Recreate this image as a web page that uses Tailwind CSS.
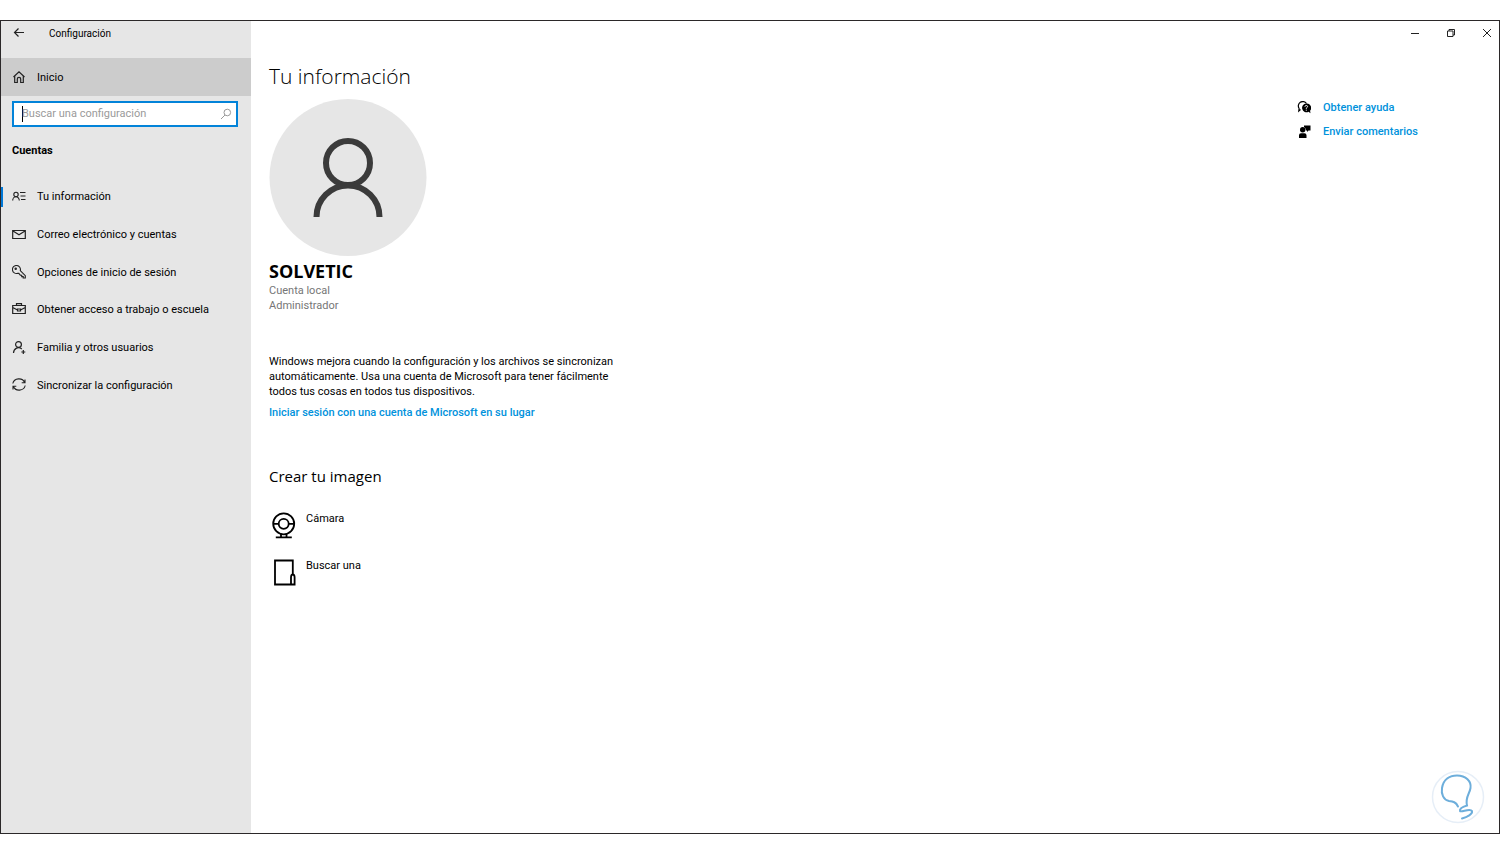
<!DOCTYPE html>
<html lang="es">

<head>
  <meta charset="UTF-8" />
  <meta name="viewport" content="width=device-width, initial-scale=1.0" />
  <title>Configuración</title>
  <script src="https://cdn.jsdelivr.net/npm/@tailwindcss/browser@4"></script>
</head>

<body class="bg-white font-[Roboto,'Open_Sans',sans-serif] text-[11px] leading-[15px] text-black">
  <div class="min-h-screen pt-5 pb-[19px] flex">
    <div class="flex-1 flex border border-[#2b2829]">

      <!-- Sidebar -->
      <aside class="w-[250px] shrink-0 bg-[#e6e6e6]">
        <header class="h-[37px] flex items-start pt-1 pl-3">
          <button aria-label="Atrás" class="w-9 h-4 flex items-center">
            <svg class="w-3 h-3" viewBox="0 0 12 12" fill="none" stroke="#222" stroke-width="1.2"><path d="M11 5.500H1.500M5.500 1.500l-4 4 4 4" /></svg>
          </button>
          <h1 class="text-[10px] leading-[18px]">Configuración</h1>
        </header>

        <a href="#" class="h-[38px] flex items-center gap-3 pl-3 bg-[#cccccc]">
          <svg class="w-3 h-3" viewBox="0 0 12 12" fill="none" stroke="#222" stroke-width="1.200"><path d="M.5 6L6 .9 11.500 6M1.700 5v6.500h2.600V8a1.700 1.700 0 0 1 3.400 0v3.500h2.600V5" /></svg>
          Inicio
        </a>

        <div class="mt-[5px] ml-[11px] mr-[13px] h-[26px] flex items-center px-2 bg-white border-2 border-[#0283d9]">
          <div class="w-px h-4 -mr-px bg-black"></div>
          <input type="text" aria-label="Buscar una configuración" placeholder="Buscar una configuración" class="flex-1 min-w-0 h-5 leading-5 outline-none placeholder:text-[#9a9a9a]" />
          <svg class="w-3 h-3 -mr-1" viewBox="0 0 12 12" fill="none" stroke="#999" stroke-width="1"><circle cx="7.300" cy="4.500" r="3.300" /><path d="M5 7L1 11" /></svg>
        </div>

        <h2 class="mt-4 mb-5 px-[11px] font-bold">Cuentas</h2>

        <nav class="h-[226px] flex flex-col">
          <a href="#" class="flex-1 flex items-center">
            <span class="w-[2px] h-5 mr-[9px] bg-[#0078d7]"></span>
            <svg class="w-[14px] h-[14px] mr-[11px]" viewBox="0 0 14 14" fill="none" stroke="#222" stroke-width="1.100"><circle cx="4" cy="4.500" r="2.200" /><path d="M.7 10.500a3.300 3.800 0 0 1 6.600 0M8 2.500h5.500M8.500 6h5M9 9.500h4.500" /></svg>
            Tu información
          </a>
          <a href="#" class="flex-1 flex items-center gap-[11px] pl-[11px]">
            <svg class="w-[14px] h-[14px]" viewBox="0 0 14 14" fill="none" stroke="#222" stroke-width="1.200"><path d="M.7 2.500h12.600v8H.7zM1 3l6 3.800L13 3" /></svg>
            Correo electrónico y cuentas
          </a>
          <a href="#" class="flex-1 flex items-center gap-[11px] pl-[11px]">
            <svg class="w-[14px] h-[14px]" viewBox="0 0 14 14" fill="none" stroke="#222" stroke-width="1.100"><path d="M5.700 8.300A4 4 0 1 1 8.300 5.600L13.300 10.700V13H11.200V11.600H9.700V10.200H8.300L6.800 8.400z" /><circle cx="3.700" cy="3.700" r=".7" /></svg>
            Opciones de inicio de sesión
          </a>
          <a href="#" class="flex-1 flex items-center gap-[11px] pl-[11px]">
            <svg class="w-[14px] h-[14px]" viewBox="0 0 14 14" fill="none" stroke="#222" stroke-width="1.200"><path d="M.7 2.500h12.600v8H.7zM4.500 2.500V.7h5v1.800M.7 4.500L5.500 7M13.300 4.500L8.500 7M5.500 6h3v2h-3z" /></svg>
            Obtener acceso a trabajo o escuela
          </a>
          <a href="#" class="flex-1 flex items-center gap-[11px] pl-[11px]">
            <svg class="w-[14px] h-[14px]" viewBox="0 0 14 14" fill="none" stroke="#222" stroke-width="1.200"><circle cx="6.500" cy="3.500" r="2.900" /><path d="M1.500 12A5 5.500 0 0 1 9.800 8M11.300 9v4M9.300 11h4" /></svg>
            Familia y otros usuarios
          </a>
          <a href="#" class="flex-1 flex items-center gap-[11px] pl-[11px]">
            <svg class="w-[14px] h-[14px]" viewBox="0 0 14 14" fill="none" stroke="#222" stroke-width="1.100"><path d="M.8 5.500A6.200 5.800 0 0 1 12.700 4.700M13 1.500v3.300H9.700M13.200 7.500A6.200 5.800 0 0 1 1.300 8.300M1 11.500V8.200h3.300" /></svg>
            Sincronizar la configuración
          </a>
        </nav>
      </aside>

      <div class="flex-1 flex flex-col">
        <!-- Window buttons -->
        <div class="h-6 flex items-center justify-end gap-6 pr-[6px]">
          <button aria-label="Minimizar"><svg class="w-3 h-3" viewBox="0 0 12 12" stroke="#222"><path d="M2 6.500h8" /></svg></button>
          <button aria-label="Restaurar"><svg class="w-3 h-3" viewBox="0 0 12 12" fill="none" stroke="#222"><path d="M2.500 4h5.500v5.500H2.500zM4 4V2.500h5.500V8H8" /></svg></button>
          <button aria-label="Cerrar"><svg class="w-3 h-3" viewBox="0 0 12 12" stroke="#222"><path d="M2 2l8 8M10 2l-8 8" /></svg></button>
        </div>

        <div class="flex-1 flex justify-between pl-[18px]">
          <main class="w-[360px]">
            <h2 class="mt-[15px] font-['Open_Sans',sans-serif] text-[21px] leading-8 font-light">Tu información</h2>
            <svg class="mt-[7px] w-[158px] h-[157px]" viewBox="0 0 158 157" fill="none" stroke="#3b3b3b" stroke-width="6"><circle cx="79" cy="78.500" r="78.500" fill="#e6e6e6" stroke="none" /><circle cx="79" cy="64" r="22" /><path d="M47.500 118a31.500 31.500 0 0 1 63 0" /></svg>
            <h3 class="mt-[3px] font-['Open_Sans',sans-serif] text-[18px] leading-6 font-bold">SOLVETIC</h3>
            <p class="text-[#767676]">Cuenta local</p>
            <p class="text-[#767676]">Administrador</p>

            <p class="mt-[41px]">Windows mejora cuando la configuración y los archivos se sincronizan<br>automáticamente. Usa una cuenta de Microsoft para tener fácilmente<br>todos tus cosas en todos tus dispositivos.</p>
            <a href="#" class="mt-[6px] block text-[#0092dc] font-medium">Iniciar sesión con una cuenta de Microsoft en su lugar</a>

            <h3 class="mt-[44px] font-['Open_Sans',sans-serif] text-[15px] leading-6">Crear tu imagen</h3>
            <a href="#" class="mt-[23px] flex gap-[9px]">
              <svg class="w-7 h-7" viewBox="0 0 28 28" fill="none" stroke="#000" stroke-width="1.800"><circle cx="14.700" cy="12.800" r="10.500" /><circle cx="14.700" cy="12.800" r="5" /><path d="M4 12.800h5.700M19.700 12.800H25M12 22.500v3.500M17.500 22.500v3.500M6.800 26.300h16" /></svg>
              Cámara
            </a>
            <a href="#" class="mt-[19px] flex gap-[9px]">
              <svg class="w-7 h-7" viewBox="0 0 28 28" fill="none" stroke="#000" stroke-width="1.800"><path d="M22 26.500H6V2.500h17.800v14M22 26.500v-7q0-3 1.800-3t1.800 3v7z" /></svg>
              Buscar una
            </a>
          </main>

          <div class="w-[202px] flex flex-col">
            <nav class="mt-[55px] flex flex-col gap-[9px] text-[#0092dc] font-medium">
              <a href="#" class="flex items-center gap-3">
                <svg class="w-[14px] h-[14px]" viewBox="0 0 14 14"><path d="M3.500 8.500L1.800 10l.3-2.500A4.200 4.200 0 1 1 9.500 2.500" fill="none" stroke="#000" stroke-width="1.200" /><path d="M9.200 2.500a4.400 4.400 0 1 0 2.300 8.300l2 1.500-.4-2.600A4.400 4.400 0 0 0 9.200 2.500z" fill="#000" /><path d="M7.900 5.700q.2-1.200 1.400-1.200t1.300 1.100q0 .7-1.300 1.500v.7M9.300 8.700v1" fill="none" stroke="#fff" /></svg>
                Obtener ayuda
              </a>
              <a href="#" class="flex items-center gap-3">
                <svg class="w-[14px] h-[14px]" viewBox="0 0 14 14" fill="#000"><circle cx="5.700" cy="4.700" r="2.700" /><path d="M2 13V10.300q0-2 2-2h3.500q2 0 2 2V13zM7 .5h6.500v5h-2L10 7V5.500H9Q9 3 7 2z" /></svg>
                Enviar comentarios
              </a>
            </nav>
            <svg class="mt-auto mb-[9px] ml-auto mr-[14px] w-[54px] h-[54px]" viewBox="0 0 54 54" fill="none" stroke-linecap="round"><circle cx="27" cy="27" r="25.500" stroke="#e6eef7" stroke-width="1.500" /><path d="M27 36.500C25 32 22 31.500 18 31C12.500 30 10 24 11 18C12.500 9 19 5.500 26 5.500C35 5.500 40.500 11.500 39.500 18C38.700 24 34 27 36 35.500C31 37 28.500 39 29 41C30 43 39 37.500 41 41C42 44 36 47 31 48.500" stroke="#6daedb" stroke-width="2" /></svg>
          </div>
        </div>
      </div>

    </div>
  </div>
</body>

</html>
